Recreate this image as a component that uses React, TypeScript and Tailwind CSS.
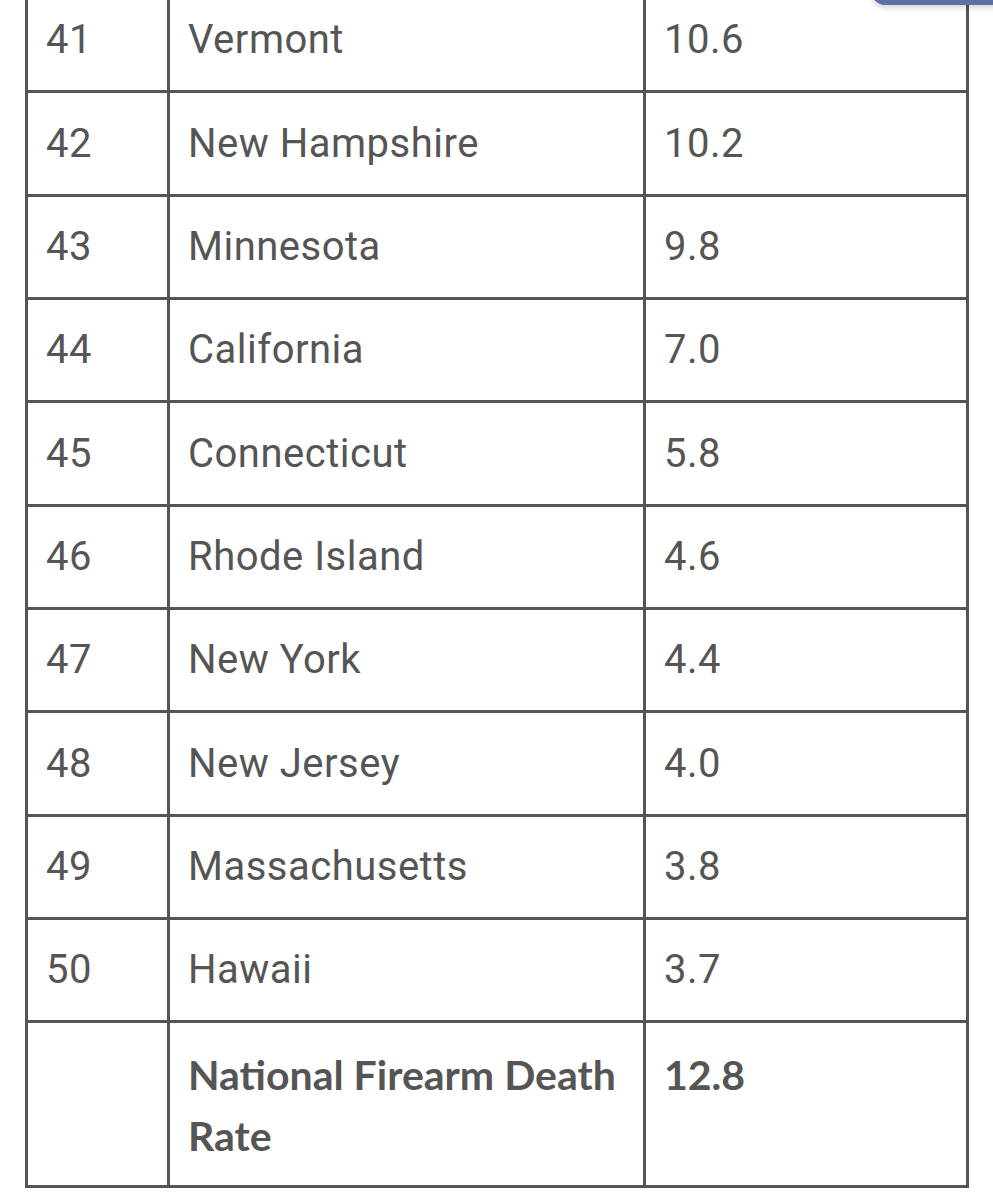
const rows = [
  { rank: 41, state: 'Vermont', rate: '10.6' },
  { rank: 42, state: 'New Hampshire', rate: '10.2' },
  { rank: 43, state: 'Minnesota', rate: '9.8' },
  { rank: 44, state: 'California', rate: '7.0' },
  { rank: 45, state: 'Connecticut', rate: '5.8' },
  { rank: 46, state: 'Rhode Island', rate: '4.6' },
  { rank: 47, state: 'New York', rate: '4.4' },
  { rank: 48, state: 'New Jersey', rate: '4.0' },
  { rank: 49, state: 'Massachusetts', rate: '3.8' },
  { rank: 50, state: 'Hawaii', rate: '3.7' },
];

const cell = 'border-[3px] border-[#555555] pl-[18px] align-middle';
const bold = `${cell} align-top pt-[21px] font-['Lato',sans-serif] font-bold text-[41px] leading-[61px]`;

const App = () => {
  return (
    <div className="relative min-h-[1200px] bg-white overflow-hidden font-['Roboto',sans-serif] text-[#555555]">
      {/* blue tab peeking from the top right */}
      <div className="absolute right-[-20px] top-[-20px] w-[141px] h-[25px] rounded-[14px] bg-[#5a72a6] shadow-[0_2px_6px_rgba(0,0,0,0.2)]" />

      <table className="ml-[25px] mt-[-13px] w-[941px] table-fixed border-collapse">
        <colgroup>
          <col className="w-[142px]" />
          <col className="w-[476px]" />
          <col className="w-[323px]" />
        </colgroup>
        <tbody>
          {rows.map((row) => (
            <tr key={row.rank} className="h-[103.35px]">
              <td className={`${cell} text-[40px] tracking-[0.5px]`}>{row.rank}</td>
              <td className={`${cell} text-[40px] tracking-[0.5px]`}>{row.state}</td>
              <td className={`${cell} text-[40px] tracking-[0.5px]`}>{row.rate}</td>
            </tr>
          ))}
          <tr className="h-[165px]">
            <td className={cell}></td>
            <td className={bold}>National Firearm Death Rate</td>
            <td className={bold}>12.8</td>
          </tr>
        </tbody>
      </table>
    </div>
  );
};

export default App;
